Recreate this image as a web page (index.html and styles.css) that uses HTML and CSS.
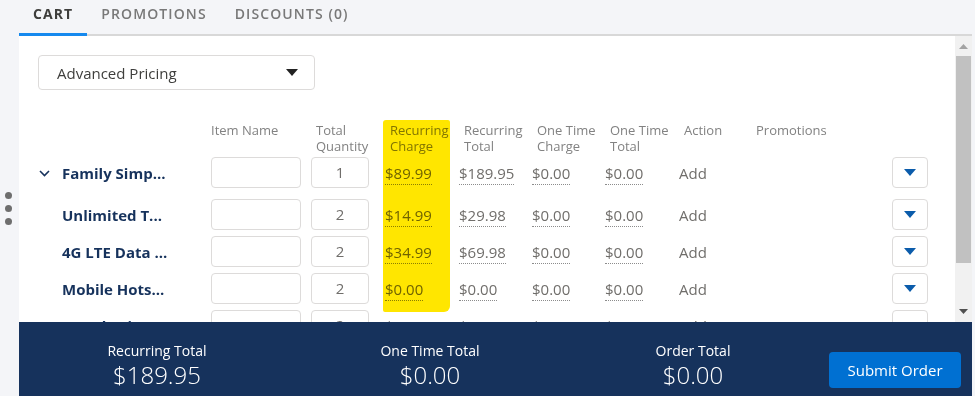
FILE: index.html
```html
<!DOCTYPE html>
<html lang="en">
<head>
  <meta charset="UTF-8">
  <title>Cart</title>
  <link rel="stylesheet" href="styles.css">
</head>
<body>
<div class="page">
  <div class="rail">
    <div class="dots"><span></span><span></span><span></span></div>
  </div>
  <div class="main">
    <div class="tabs">
      <div class="tab active">CART</div>
      <div class="tab">PROMOTIONS</div>
      <div class="tab">DISCOUNTS (0)</div>
    </div>
    <div class="panel">
      <div class="scroller">
        <div class="content">
          <div class="highlight"></div>
          <div class="select">
            <span>Advanced Pricing</span>
            <svg width="12" height="7" viewBox="0 0 12 7"><path d="M0 0h12L6 7z" fill="#222"/></svg>
          </div>

          <div class="grid head">
            <div></div>
            <div class="h">Item Name</div>
            <div class="h pad">Total<br>Quantity</div>
            <div class="h pad">Recurring<br>Charge</div>
            <div class="h pad">Recurring<br>Total</div>
            <div class="h pad">One Time<br>Charge</div>
            <div class="h pad">One Time<br>Total</div>
            <div class="h pad">Action</div>
            <div class="h">Promotions</div>
            <div></div>
          </div>

          <div class="grid row parent">
            <div class="name"><svg class="chev" width="11" height="7" viewBox="0 0 11 7"><path d="M1 1l4.5 4.5L10 1" fill="none" stroke="#16325c" stroke-width="1.6"/></svg>Family Simp...</div>
            <div><div class="input"></div></div>
            <div><div class="input qty">1</div></div>
            <div><span class="val">$89.99</span></div>
            <div><span class="val">$189.95</span></div>
            <div><span class="val">$0.00</span></div>
            <div><span class="val">$0.00</span></div>
            <div class="add">Add</div>
            <div></div>
            <div class="promo"><svg width="12" height="7" viewBox="0 0 12 7"><path d="M0 0h12L6 7z" fill="#0b5cab"/></svg></div>
          </div>

          <div class="grid row">
            <div class="name">Unlimited T...</div>
            <div><div class="input"></div></div>
            <div><div class="input qty">2</div></div>
            <div><span class="val">$14.99</span></div>
            <div><span class="val">$29.98</span></div>
            <div><span class="val">$0.00</span></div>
            <div><span class="val">$0.00</span></div>
            <div class="add">Add</div>
            <div></div>
            <div class="promo"><svg width="12" height="7" viewBox="0 0 12 7"><path d="M0 0h12L6 7z" fill="#0b5cab"/></svg></div>
          </div>

          <div class="grid row">
            <div class="name">4G LTE Data ...</div>
            <div><div class="input"></div></div>
            <div><div class="input qty">2</div></div>
            <div><span class="val">$34.99</span></div>
            <div><span class="val">$69.98</span></div>
            <div><span class="val">$0.00</span></div>
            <div><span class="val">$0.00</span></div>
            <div class="add">Add</div>
            <div></div>
            <div class="promo"><svg width="12" height="7" viewBox="0 0 12 7"><path d="M0 0h12L6 7z" fill="#0b5cab"/></svg></div>
          </div>

          <div class="grid row">
            <div class="name">Mobile Hots...</div>
            <div><div class="input"></div></div>
            <div><div class="input qty">2</div></div>
            <div><span class="val">$0.00</span></div>
            <div><span class="val">$0.00</span></div>
            <div><span class="val">$0.00</span></div>
            <div><span class="val">$0.00</span></div>
            <div class="add">Add</div>
            <div></div>
            <div class="promo"><svg width="12" height="7" viewBox="0 0 12 7"><path d="M0 0h12L6 7z" fill="#0b5cab"/></svg></div>
          </div>

          <div class="grid row">
            <div class="name">Net Sharing...</div>
            <div><div class="input"></div></div>
            <div><div class="input qty">2</div></div>
            <div><span class="val">$0.00</span></div>
            <div><span class="val">$0.00</span></div>
            <div><span class="val">$0.00</span></div>
            <div><span class="val">$0.00</span></div>
            <div class="add">Add</div>
            <div></div>
            <div class="promo"><svg width="12" height="7" viewBox="0 0 12 7"><path d="M0 0h12L6 7z" fill="#0b5cab"/></svg></div>
          </div>
        </div>
        <div class="scrollbar">
          <div class="sb-btn"><svg width="9" height="5" viewBox="0 0 9 5"><path d="M0 5h9L4.5 0z" fill="#a3a3a3"/></svg></div>
          <div class="sb-thumb"></div>
          <div class="sb-track"></div>
          <div class="sb-btn down"><svg width="9" height="5" viewBox="0 0 9 5"><path d="M0 0h9L4.5 5z" fill="#505050"/></svg></div>
        </div>
      </div>

      <div class="footer">
        <div class="total">
          <div class="label">Recurring Total</div>
          <div class="amount">$189.95</div>
        </div>
        <div class="total">
          <div class="label">One Time Total</div>
          <div class="amount">$0.00</div>
        </div>
        <div class="total">
          <div class="label">Order Total</div>
          <div class="amount">$0.00</div>
        </div>
        <div class="actions">
          <button class="submit">Submit Order</button>
        </div>
      </div>
    </div>
  </div>
</div>
</body>
</html>
```

FILE: styles.css
```css
html, body {
  margin: 0;
  height: 100%;
}

body {
  background-color: #f4f5f8;
  font-family: "Open Sans", "Liberation Sans", sans-serif;
  color: #3e3e3c;
  overflow: hidden;
}

.page {
  display: flex;
  height: 396px;
}

.rail {
  width: 19px;
  flex: none;
}

.dots {
  display: flex;
  flex-direction: column;
  align-items: center;
  gap: 6px;
  margin-top: 192px;
  padding-right: 3px;
}

.dots span {
  width: 7px;
  height: 7px;
  border-radius: 50%;
  background-color: #6e6e6e;
}

.main {
  width: 953px;
  display: flex;
  flex-direction: column;
}

/* tabs */
.tabs {
  display: flex;
  height: 34px;
  border-bottom: 2px solid #d8d8d8;
}

.tab {
  box-sizing: border-box;
  height: 36px;
  padding: 0 14px;
  line-height: 27px;
  font-size: 14px;
  font-weight: 600;
  letter-spacing: 1.1px;
  color: #787878;
  border-bottom: 3px solid transparent;
}

.tab.active {
  color: #3e3e3c;
  font-weight: 700;
  border-bottom-color: #1589ee;
}

/* panel */
.panel {
  flex: 1;
  display: flex;
  flex-direction: column;
  background-color: #fff;
}

.scroller {
  height: 286px;
  display: flex;
  overflow: hidden;
}

.content {
  flex: 1;
  position: relative;
  padding: 19px 0 0 19px;
}

.highlight {
  position: absolute;
  left: 364px;
  top: 84px;
  width: 67px;
  height: 192px;
  background-color: #ffe600;
  border-radius: 3px 2px 6px 2px;
  mix-blend-mode: multiply;
  pointer-events: none;
  z-index: 2;
}

.select {
  box-sizing: border-box;
  width: 277px;
  height: 35px;
  border: 1px solid #dddbda;
  border-radius: 4px;
  display: flex;
  align-items: center;
  justify-content: space-between;
  padding: 0 16px 0 18px;
  font-size: 15px;
  color: #3e3e3c;
}

.grid {
  display: grid;
  grid-template-columns: 173px 100px 74px 74px 73px 73px 74px 77px 136px 36px;
  align-items: center;
}

.head {
  margin-top: 32px;
  align-items: start;
}

.h {
  font-size: 13px;
  line-height: 16px;
  color: #828282;
}

.h.pad {
  padding-left: 5px;
}

.row {
  height: 31px;
  margin-top: 6px;
}

.row.parent {
  margin-top: 3px;
  margin-bottom: 11px;
}

.name {
  font-size: 15px;
  font-weight: 700;
  color: #16325c;
  padding-left: 24px;
  position: relative;
  white-space: nowrap;
}

.chev {
  position: absolute;
  left: 1px;
  top: 7px;
}

.input {
  box-sizing: border-box;
  width: 90px;
  height: 31px;
  border: 1px solid #dddbda;
  border-radius: 4px;
  font-size: 15px;
  color: #706e6b;
  text-align: center;
  line-height: 29px;
}

.input.qty {
  width: 58px;
}

.val {
  font-size: 15px;
  color: #706e6b;
  border-bottom: 1px dotted #8c8c8c;
  padding-bottom: 1px;
}

.add {
  font-size: 15px;
  color: #706e6b;
}

.promo {
  box-sizing: border-box;
  height: 31px;
  border: 1px solid #dddbda;
  border-radius: 4px;
  display: flex;
  align-items: center;
  justify-content: center;
}

/* scrollbar */
.scrollbar {
  width: 17px;
  display: flex;
  flex-direction: column;
  background-color: #f1f1f1;
}

.sb-btn {
  height: 20px;
  display: flex;
  align-items: center;
  justify-content: center;
}

.sb-thumb {
  height: 207px;
  margin: 0 1px;
  background-color: #c1c1c1;
}

.sb-track {
  flex: 1;
}

.sb-btn.down {
  height: 18px;
  padding-bottom: 2px;
}

/* footer */
.footer {
  height: 74px;
  background-color: #16325c;
  display: grid;
  grid-template-columns: 276px 270px 256px auto;
  color: #fff;
}

.total {
  text-align: center;
  padding-top: 20px;
}

.label {
  font-size: 14px;
  line-height: 18px;
}

.amount {
  font-size: 24px;
  font-weight: 300;
  line-height: 30px;
}

.actions {
  padding: 30px 0 0 8px;
}

.submit {
  width: 132px;
  height: 36px;
  border: 0;
  border-radius: 4px;
  background-color: #0070d2;
  color: #fff;
  font-family: "Open Sans", "Liberation Sans", sans-serif;
  font-size: 15px;
}
```
